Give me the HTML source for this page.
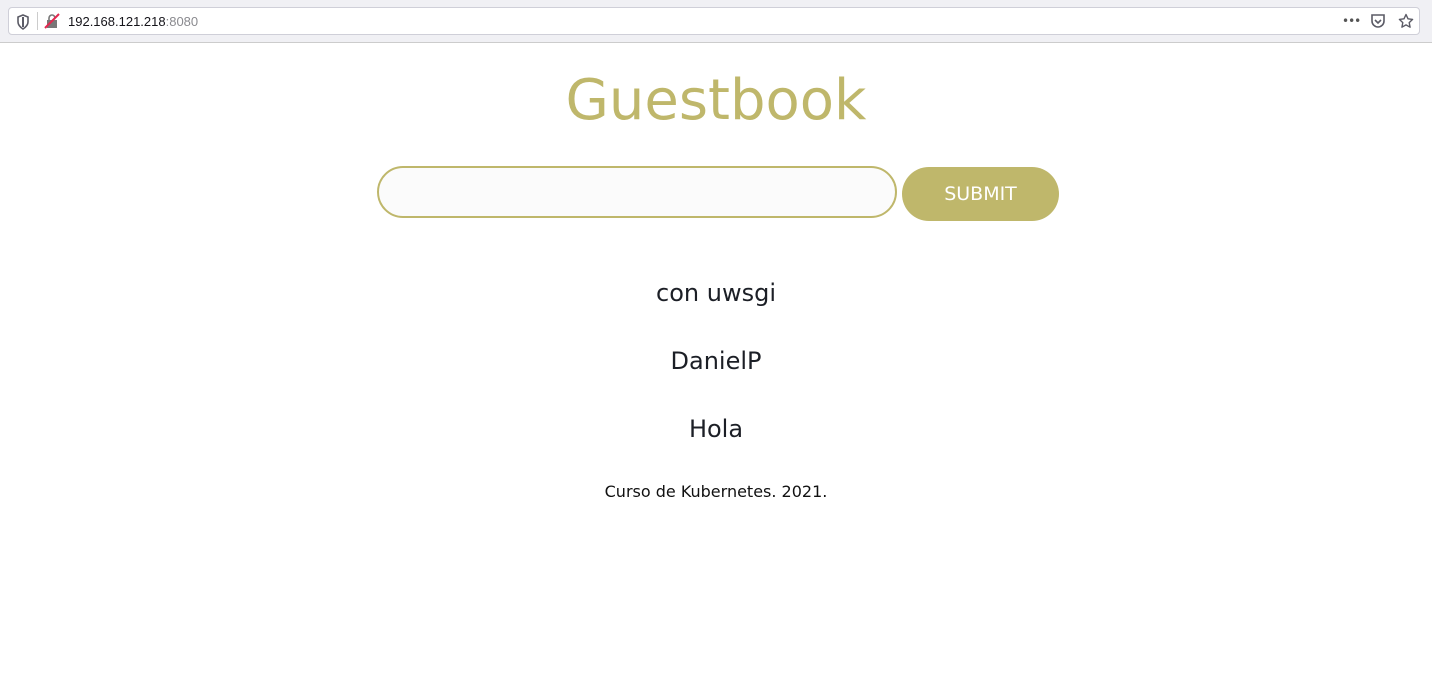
<!DOCTYPE html>
<html><head><meta charset="utf-8"><style>
body{margin:0;width:1432px;height:685px;background:#fff;font-family:"DejaVu Sans","Liberation Sans",sans-serif;overflow:hidden;position:relative}
.bar{position:absolute;left:0;top:0;width:1432px;height:42px;background:#f0f0f4;border-bottom:1px solid #ccc}
.url{position:absolute;left:8px;top:7px;width:1412px;height:28px;background:#fff;border:1px solid #cfcfd8;border-radius:4px;box-sizing:border-box}
.ut{position:absolute;left:68px;top:14px;font-size:13px;color:#15141a;font-family:"Liberation Sans",sans-serif}
.ut span{color:#8a8a8f}
h1{position:absolute;top:68px;left:0;width:100%;text-align:center;margin:0;font-weight:normal;font-size:56px;color:#bfb76b}
.inp{position:absolute;left:377px;top:166px;width:520px;height:52px;box-sizing:border-box;border:2px solid #bfb76b;border-radius:26px;background:#fbfbfb}
.btn{position:absolute;left:902px;top:167px;width:157px;height:54px;border-radius:27px;background:#bfb76b;color:#fff;font-size:19px;text-align:center;line-height:54px}
.e{position:absolute;left:0;width:100%;text-align:center;font-size:24px;color:#1c1f26}
.f{position:absolute;left:0;width:100%;text-align:center;font-size:16px;color:#111;top:482px}
</style></head><body>
<div class="bar"><div class="url"></div>
<svg style="position:absolute;left:16px;top:14px" width="14" height="16" viewBox="0 0 14 16"><path d="M7 1L2 3v5c0 3 2 5 5 7 3-2 5-4 5-7V3z" fill="none" stroke="#5b5b66" stroke-width="1.6"/><path d="M7 3v10" stroke="#5b5b66" stroke-width="2"/></svg>
<div style="position:absolute;left:37px;top:12px;width:1px;height:18px;background:#ccc"></div>
<svg style="position:absolute;left:44px;top:13px" width="16" height="16" viewBox="0 0 16 16"><rect x="3" y="7" width="10" height="8" fill="#777"/><path d="M5 7V5a3 3 0 016 0" fill="none" stroke="#777" stroke-width="1.6"/><path d="M1 15L15 1" stroke="#e22850" stroke-width="2"/></svg>
<div class="ut">192.168.121.218<span>:8080</span></div>
<div style="position:absolute;left:1342px;top:14px;font-size:12px;color:#555;letter-spacing:-1px">•••</div>
<svg style="position:absolute;left:1370px;top:13px" width="16" height="16" viewBox="0 0 16 16"><path d="M2 2h12v6a6 6 0 01-12 0z" fill="none" stroke="#5b5b66" stroke-width="1.6"/><path d="M5 7l3 3 3-3" fill="none" stroke="#5b5b66" stroke-width="1.6"/></svg>
<svg style="position:absolute;left:1398px;top:13px" width="16" height="16" viewBox="0 0 16 16"><path d="M8 1.5l2 4.3 4.6.6-3.4 3.2.9 4.6L8 11.9l-4.1 2.3.9-4.6L1.4 6.4 6 5.8z" fill="none" stroke="#5b5b66" stroke-width="1.4" stroke-linejoin="round"/></svg>
</div>
<h1>Guestbook</h1>
<div class="inp"></div>
<div class="btn">SUBMIT</div>
<div class="e" style="top:279px">con uwsgi</div>
<div class="e" style="top:347px">DanielP</div>
<div class="e" style="top:415px">Hola</div>
<div class="f">Curso de Kubernetes. 2021.</div>
</body></html>
